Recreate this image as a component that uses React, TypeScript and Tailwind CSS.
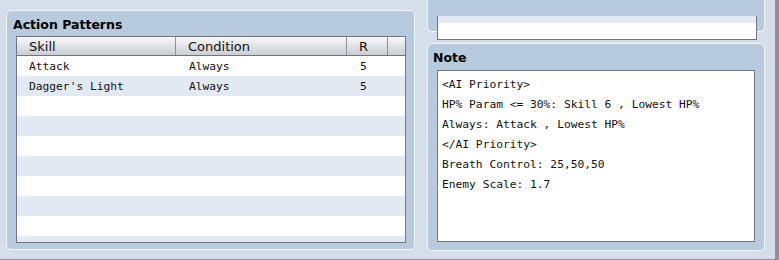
import React from "react";

const rows = [
  { skill: "Attack", condition: "Always", r: "5" },
  { skill: "Dagger's Light", condition: "Always", r: "5" },
];

const noteLines = [
  "<AI Priority>",
  "HP% Param <= 30%: Skill 6 , Lowest HP%",
  "Always: Attack , Lowest HP%",
  "</AI Priority>",
  "Breath Control: 25,50,50",
  "Enemy Scale: 1.7",
];

const sans = "font-['DejaVu_Sans',sans-serif]";
const mono = "font-['DejaVu_Sans_Mono',monospace]";

function ActionPatterns() {
  const filler = Array.from({ length: 10 - rows.length });
  return (
    <div className="ml-[6px] mt-[10px] h-[240px] w-[409px] rounded-[5px] border border-[#f3f7fb] bg-[#b8cadd] pl-[6px] pr-[8px] pt-[3px]">
      <div className={`${sans} text-[12.5px] font-bold leading-[21px] text-black`}>Action Patterns</div>
      <div className="ml-[3px] mt-[1px] h-[207px] w-[390px] overflow-hidden border border-[#72777f] bg-white">
        <div className={`${sans} flex h-[19px] border-b border-[#6f747c] bg-gradient-to-b from-[#f8f9fa] to-[#cacdd3] text-[13px] leading-[19px] text-[#111]`}>
          <div className="w-[159px] border-r border-[#8d9199] pl-[12px]">Skill</div>
          <div className="w-[171px] border-r border-[#8d9199] pl-[12px]">Condition</div>
          <div className="w-[41px] border-r border-[#8d9199] pl-[12px]">R</div>
          <div className="flex-1" />
        </div>
        {rows.map((row, i) => (
          <div
            key={row.skill}
            className={`${mono} flex h-[20px] pt-[2px] text-[11.25px] leading-[18px] text-[#111] ${i % 2 ? "bg-[#e2e9f2]" : "bg-white"}`}
          >
            <div className="w-[159px] pl-[12px]">{row.skill}</div>
            <div className="w-[171px] pl-[13px]">{row.condition}</div>
            <div className="w-[41px] pl-[13px]">{row.r}</div>
          </div>
        ))}
        {filler.map((_, i) => (
          <div key={i} className={`h-[20px] ${(i + rows.length) % 2 ? "bg-[#e2e9f2]" : "bg-white"}`} />
        ))}
      </div>
    </div>
  );
}

function Note() {
  return (
    <div className="mt-[11px] h-[208px] w-[338px] rounded-[5px] border border-[#f3f7fb] bg-[#b8cadd] pl-[5px] pt-[3px]">
      <div className={`${sans} text-[12.5px] font-bold leading-[21px] text-black`}>Note</div>
      <div className={`${mono} ml-[4px] mt-[2px] h-[172px] w-[318px] border border-[#72777f] bg-white pl-[4px] pt-[4px] text-[11.25px] leading-[20px] text-[#111]`}>
        {noteLines.map((line) => (
          <div key={line} className="whitespace-pre">{line}</div>
        ))}
      </div>
    </div>
  );
}

export default function App() {
  return (
    <div className="flex h-[260px] w-[779px] overflow-hidden border-b border-r-[4px] border-[#8c9199] bg-[#d4dfeb]">
      <ActionPatterns />
      <div className="ml-[12px] flex flex-col">
        <div className="h-[32px] w-[338px] rounded-b-[5px] border border-t-0 border-[#f3f7fb] bg-[#b8cadd] pl-[9px]">
          <div className="h-[24px] w-[320px] border border-t-0 border-[#72777f] bg-white">
            <div className="mt-[16px] h-[7px] bg-[#e2e9f2]" />
          </div>
        </div>
        <Note />
      </div>
    </div>
  );
}
